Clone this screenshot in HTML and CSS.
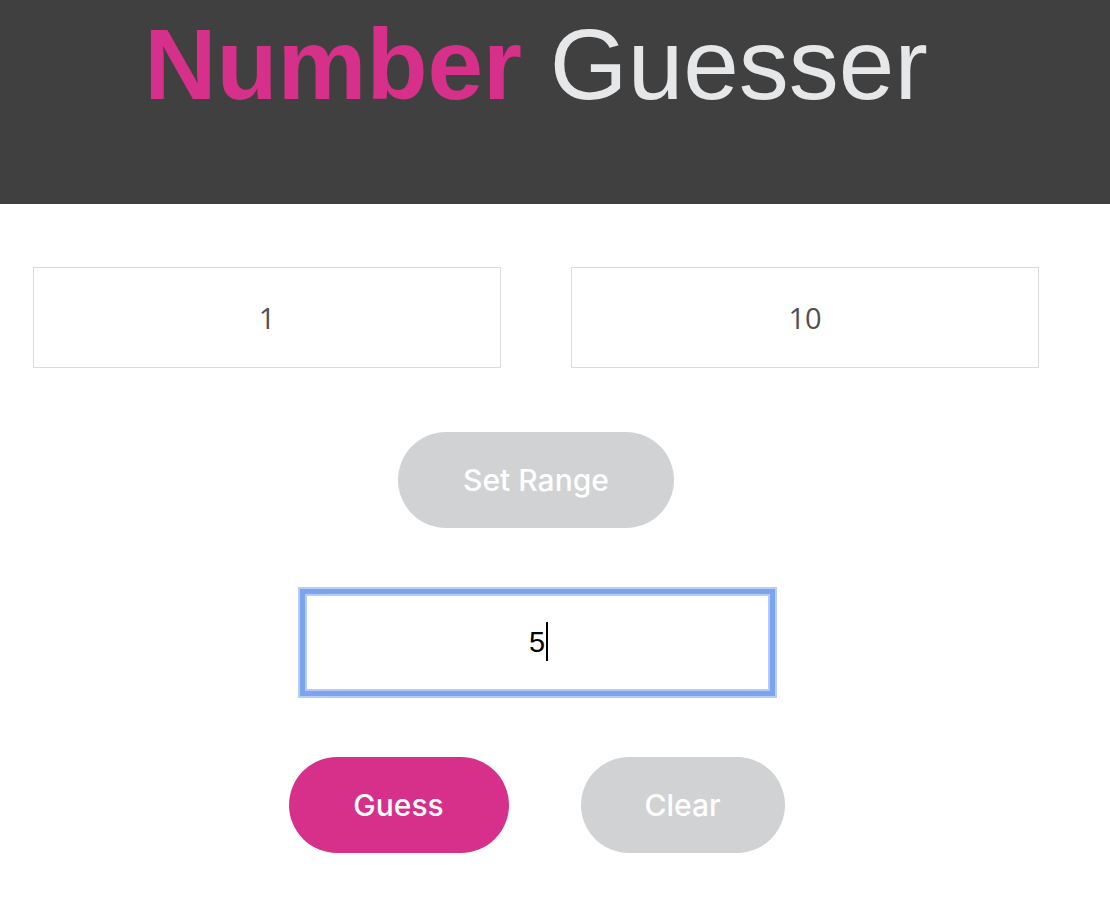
FILE: index.html
```html
<!DOCTYPE html>
<html lang="en">
<head>
<meta charset="utf-8">
<title>Number Guesser</title>
<link rel="stylesheet" href="styles.css">
</head>
<body>
<header class="site-header">
  <h1 class="title"><span class="title-strong">Number</span> <span class="title-light">Guesser</span></h1>
</header>
<main class="game">
  <section class="range-row">
    <input class="range-input" type="text" value="1" aria-label="Minimum">
    <input class="range-input" type="text" value="10" aria-label="Maximum">
  </section>
  <button class="pill pill-grey pill-range" type="button">Set Range</button>
  <div class="guess-wrap">
    <input class="guess-input is-focused" type="text" value="5" aria-label="Your guess">
    <span class="caret"></span>
  </div>
  <div class="action-row">
    <button class="pill pill-pink pill-guess" type="button">Guess</button>
    <button class="pill pill-grey pill-clear" type="button">Clear</button>
  </div>
</main>
</body>
</html>
```
FILE: styles.css
```css
* {
  box-sizing: border-box;
}

body {
  margin: 0;
  background: #ffffff;
  font-family: "Liberation Sans", Arial, sans-serif;
}

.site-header {
  width: 1072px;
  height: 204px;
  background: #404040;
  padding-top: 14px;
  box-shadow: 38px 0 0 #404040;
}

.title {
  margin: 0;
  text-align: center;
  font-size: 100px;
  line-height: 100px;
  font-weight: 400;
  white-space: nowrap;
}

.title-strong {
  color: #d7308a;
  font-weight: 700;
}

.title-light {
  color: #e6e7e8;
  font-weight: 400;
}

.game {
  width: 1072px;
  display: flex;
  flex-direction: column;
  align-items: center;
  padding-top: 63px;
}

.range-row {
  display: flex;
  gap: 70px;
}

.range-input {
  width: 468px;
  height: 101px;
  border: 1px solid #dcdcdc;
  background: #fff;
  text-align: center;
  font-family: "Open Sans", sans-serif;
  font-size: 29px;
  color: #505050;
  outline: none;
  padding: 0;
}

.pill {
  height: 96px;
  border: none;
  border-radius: 48px;
  padding: 0;
  font-family: Inter, "Liberation Sans", sans-serif;
  font-size: 30px;
  font-weight: 500;
  color: #ffffff;
  cursor: pointer;
}

.pill-grey {
  background: #d1d2d4;
}

.pill-pink {
  background: #d7308a;
}

.pill-range {
  width: 276px;
  margin-top: 64px;
}

.pill-guess {
  width: 220px;
}

.pill-clear {
  width: 204px;
}

.guess-wrap {
  position: relative;
  margin-top: 66px;
  margin-left: 2px;
}

.guess-input {
  width: 465px;
  height: 97px;
  background: #fff;
  text-align: center;
  font-family: "Liberation Sans", Arial, sans-serif;
  font-size: 29px;
  color: #000;
  padding: 0;
  outline: none;
  border: 2px solid #b3cbf5;
  caret-color: transparent;
}

.guess-input.is-focused {
  box-shadow: 0 0 0 5px #7ba3ee, 0 0 0 7px #b6cdf6;
}

.caret {
  position: absolute;
  left: calc(50% + 9px);
  top: 28px;
  width: 2px;
  height: 39px;
  background: #000;
}

.action-row {
  display: flex;
  gap: 72px;
  margin-top: 66px;
  margin-left: 1px;
}
```
